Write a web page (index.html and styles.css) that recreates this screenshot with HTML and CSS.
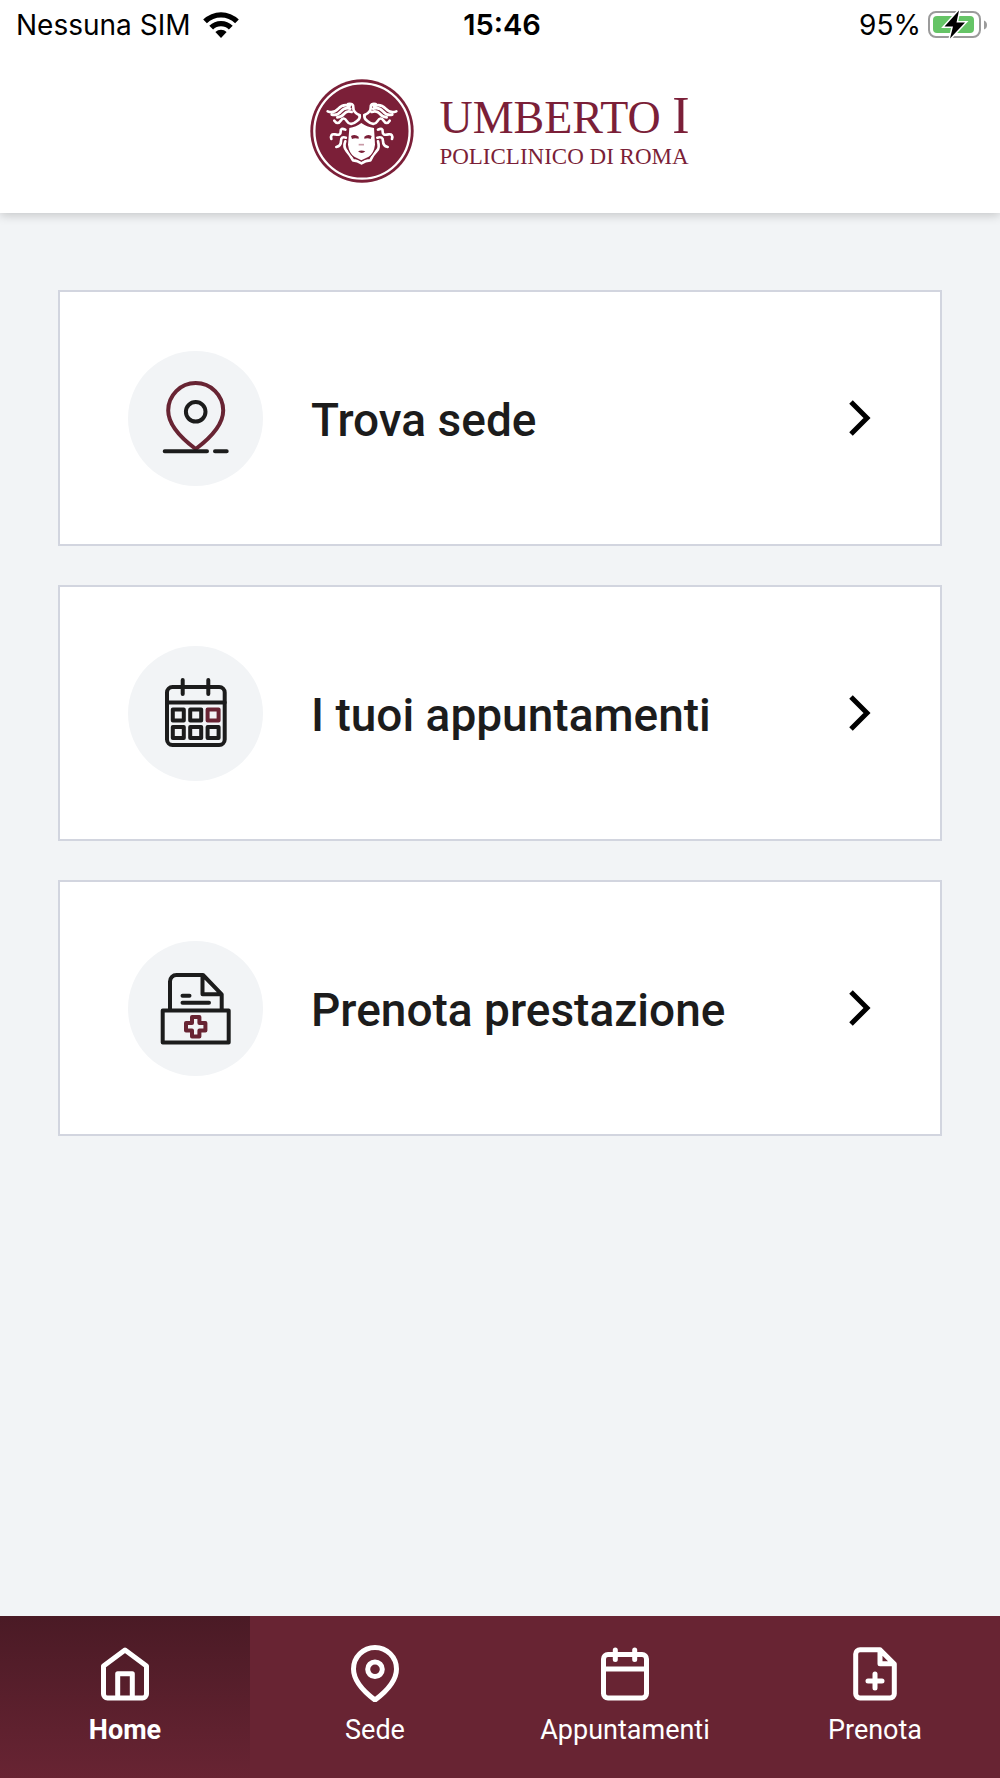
FILE: index.html
```html
<!DOCTYPE html>
<html lang="it">
<head>
<meta charset="utf-8">
<meta name="viewport" content="width=device-width, initial-scale=1">
<title>Umberto I – Policlinico di Roma</title>
<link rel="stylesheet" href="styles.css">
</head>
<body>
<div class="app">
  <header class="header">
    <div class="status">
      <div class="status-left">
        <span>Nessuna SIM</span>
        <svg width="38" height="28" viewBox="0 0 38 28" aria-hidden="true">
          <path d="M1.200 8.500a25.500 25.500 0 0 1 35.600 0l-3.700 3.800a20.200 20.200 0 0 0-28.200 0z"/>
          <path d="M7.300 14.700a16.800 16.800 0 0 1 23.400 0l-3.800 3.800a11.500 11.500 0 0 0-15.800 0z"/>
          <path d="M13.400 20.900a8.200 8.200 0 0 1 11.200 0l-5.600 6z"/>
        </svg>
      </div>
      <time class="status-time">15:46</time>
      <div class="status-right">
        <span>95%</span>
        <svg width="60" height="30" viewBox="0 0 60 30" aria-hidden="true">
          <rect x="1" y="2" width="51" height="25" rx="7" fill="#fff" stroke="#9b9b9b" stroke-width="2"/>
          <rect x="5" y="6" width="41" height="17" rx="4" fill="#65c466"/>
          <path d="M56 10.500q3 1 3 4.500t-3 4.500z" fill="#9b9b9b"/>
          <path d="M31 .5L16.500 16.500h8.500L22 28.500 37 12.500h-8.500z" fill="#000" stroke="#fff" stroke-width="3" paint-order="stroke"/>
        </svg>
      </div>
    </div>
    <div class="brand">
      <svg class="emblem" viewBox="27 26 312 312" aria-hidden="true">
        <circle cx="183" cy="182" r="155" fill="#7b1f38"/>
        <circle cx="183" cy="182" r="143" fill="none" stroke="#fff" stroke-width="7"/>
        <g fill="none" stroke="#fff" stroke-width="8" stroke-linecap="round" stroke-linejoin="round">
          <path d="M80 123Q97 131 112 115T146 107M92 133Q109 137 120 123T148 115M109 141Q122 140 130 130T152 125M141 101Q158 98 157 112T174 134"/>
          <path d="M286 123Q269 131 254 115T218 107M274 133Q257 137 246 123T216 115M257 141Q244 140 236 130T212 125M224 101Q208 98 209 112T191 134"/>
          <path d="M100 151Q110 165 119 151Q128 137 138 153T169 151Q178 145 176 134"/>
          <path d="M266 151Q257 165 248 151Q239 137 229 153T198 151Q189 145 190 134"/>
          <path d="M133 178Q118 171 119 184T101 192Q87 190 91 206M135 202Q120 197 120 212T106 230"/>
          <path d="M231 178Q246 171 245 184T263 192Q277 190 273 206M229 202Q246 197 246 212T260 230"/>
          <path d="M133 213Q126 230 137 242T156 270Q170 270 181 279Q193 270 208 270Q217 251 227 242T231 213"/>
        </g>
        <path d="M145 173Q166 170 181 158Q197 170 219 173L222 223Q219 248 203 259L181 270L160 259Q144 248 141 223Z" fill="#fff" stroke="#7b1f38" stroke-width="8" paint-order="stroke"/>
        <path d="M150 197q12-7 23 2v6q-12-3-20 1zM212 197q-12-7-22 2v6q11-3 19 1zM171 243q10-5 22 0-10 10-22 0z" fill="#7b1f38"/>
        <path d="M173 223h16" stroke="#c99aa6" stroke-width="5"/>
      </svg>
      <div class="wordmark">
        <span class="wordmark-name">UMBERTO <span class="wordmark-numeral">I</span></span>
        <span class="wordmark-place">POLICLINICO DI ROMA</span>
      </div>
    </div>
  </header>

  <main class="cards">
    <a class="card" href="#sede">
      <svg class="card-icon" viewBox="0 0 135 135" aria-hidden="true">
        <path class="accent" d="M67.700 98C55 88.500 40.200 74 40.200 59.500a27.500 27.500 0 0 1 55 0C95.200 74 80.400 88.500 67.700 98z"/>
        <circle cx="67.700" cy="60.800" r="9.800"/>
        <path d="M36.700 100.200H79M87 100.200h11.700"/>
      </svg>
      <span class="card-title">Trova sede</span>
      <svg class="chevron" viewBox="0 0 24 40" aria-hidden="true"><path d="M3 4l16 16L3 36"/></svg>
    </a>
    <a class="card" href="#appuntamenti">
      <svg class="card-icon" viewBox="0 0 135 135" aria-hidden="true">
        <rect x="39" y="41" width="57.700" height="58" rx="5.500"/>
        <path d="M39 56.500h57.700M54.700 34v14M80.300 34v14"/>
        <path d="M44.800 63.500h11v11h-11zM62.200 63.500h11v11h-11zM44.800 81h11v11h-11zM62.200 81h11v11h-11zM79.600 81h11v11h-11z"/>
        <path class="accent" d="M79.600 63.500h11v11h-11z"/>
      </svg>
      <span class="card-title">I tuoi appuntamenti</span>
      <svg class="chevron" viewBox="0 0 24 40" aria-hidden="true"><path d="M3 4l16 16L3 36"/></svg>
    </a>
    <a class="card" href="#prenota">
      <svg class="card-icon" viewBox="0 0 135 135" aria-hidden="true">
        <path d="M34.700 69.500h66v32h-66zM42 69V40.500a6.500 6.500 0 0 1 6.500-6.500H75l18.700 19.300V69M74.500 34v19.300h19"/>
        <path d="M54.500 54.700h7M54.500 61.700h26.500"/>
        <path class="accent" d="M64 76h7.400v6h6v7.400h-6v6H64v-6h-6V82h6z"/>
      </svg>
      <span class="card-title">Prenota prestazione</span>
      <svg class="chevron" viewBox="0 0 24 40" aria-hidden="true"><path d="M3 4l16 16L3 36"/></svg>
    </a>
  </main>

  <nav class="tabs">
    <a class="tab tab-active" href="#home" aria-current="page">
      <svg class="tab-icon" viewBox="0 0 58 58" aria-hidden="true"><path d="M29 6l21.500 16v28a4 4 0 0 1-4 4h-35a4 4 0 0 1-4-4V22zM21.700 54V29.700h14.600V54"/></svg>
      <span>Home</span>
    </a>
    <a class="tab" href="#sede">
      <svg class="tab-icon" viewBox="0 0 58 58" aria-hidden="true"><path d="M29 56C19 48.500 7.500 37 7.500 25a21.500 21.500 0 0 1 43 0C50.500 37 39 48.500 29 56z"/><circle cx="29" cy="25.300" r="7.300"/></svg>
      <span>Sede</span>
    </a>
    <a class="tab" href="#appuntamenti">
      <svg class="tab-icon" viewBox="0 0 58 58" aria-hidden="true"><rect x="7.500" y="10.500" width="43" height="43.500" rx="4.500"/><path d="M7.500 25h43M19.300 6v9.500M38.700 6v9.500"/></svg>
      <span>Appuntamenti</span>
    </a>
    <a class="tab" href="#prenota">
      <svg class="tab-icon" viewBox="0 0 58 58" aria-hidden="true"><path d="M34 5.700H14a4.300 4.300 0 0 0-4.300 4.300v39.700A4.300 4.300 0 0 0 14 54h30a4.300 4.300 0 0 0 4.300-4.300V20zM34 5.700v14h14M29 30v14M22 37h14"/></svg>
      <span>Prenota</span>
    </a>
  </nav>
</div>
</body>
</html>
```
FILE: styles.css
```css
* {
  box-sizing: border-box;
}

body {
  margin: 0;
  background: #f2f4f6;
  color: #1c1c1c;
  font-family: Roboto, "Noto Sans", sans-serif;
}

a {
  color: inherit;
  text-decoration: none;
}

svg {
  display: block;
  flex: none;
}

.app {
  display: flex;
  flex-direction: column;
  min-height: 100vh;
}

.header {
  background: #fff;
  padding-bottom: 30px;
  box-shadow: 0 2px 10px rgba(0, 0, 0, 0.2);
}

.status {
  display: grid;
  grid-template-columns: 1fr auto 1fr;
  align-items: center;
  height: 50px;
  padding: 0 12px 0 16px;
  color: #000;
  font: 28px/50px Inter, sans-serif;
}

.status-left,
.status-right {
  display: flex;
  align-items: center;
  gap: 12px;
}

.status-right {
  justify-content: flex-end;
  gap: 7px;
}

.status-time {
  font-size: 29px;
  font-weight: 600;
}

.brand {
  display: flex;
  justify-content: center;
  gap: 25px;
  padding-top: 29px;
}

.emblem {
  width: 104px;
  height: 104px;
}

.wordmark {
  display: flex;
  flex-direction: column;
  padding-top: 12px;
  color: #7b1f38;
  font-family: "Liberation Serif", serif;
  white-space: nowrap;
}

.wordmark-name {
  font-size: 46px;
  line-height: 50px;
}

.wordmark-numeral {
  font-size: 52px;
  line-height: 50px;
}

.wordmark-place {
  font-size: 23px;
  line-height: 28px;
}

.cards {
  display: flex;
  flex: 1;
  flex-direction: column;
  gap: 39px;
  padding: 77px 58px;
}

.card {
  display: flex;
  align-items: center;
  height: 256px;
  padding: 0 68px;
  border: 2px solid #d2d5df;
  background: #fff;
}

.card-icon {
  width: 135px;
  height: 135px;
  border-radius: 50%;
  background: #f2f4f6;
  fill: none;
  stroke: #1c1c1c;
  stroke-width: 4;
  stroke-linecap: round;
  stroke-linejoin: round;
}

.accent {
  stroke: #682433;
}

.card-title {
  flex: 1;
  padding: 4px 0 0 48px;
  font-size: 46px;
  font-weight: 500;
  line-height: 60px;
}

.chevron {
  width: 24px;
  height: 40px;
  fill: none;
  stroke: #000;
  stroke-width: 5;
}

.tabs {
  display: grid;
  grid-template-columns: repeat(4, 1fr);
  background: #682433;
  color: #fff;
}

.tab {
  display: flex;
  flex-direction: column;
  align-items: center;
  gap: 10px;
  padding: 28px 0 30px;
  font-size: 27px;
  line-height: 36px;
}

.tab-active {
  background: linear-gradient(#4a1a25, #682433);
  font-weight: 700;
}

.tab-icon {
  width: 58px;
  height: 58px;
  fill: none;
  stroke: #fff;
  stroke-width: 5;
  stroke-linecap: round;
  stroke-linejoin: round;
}
```
